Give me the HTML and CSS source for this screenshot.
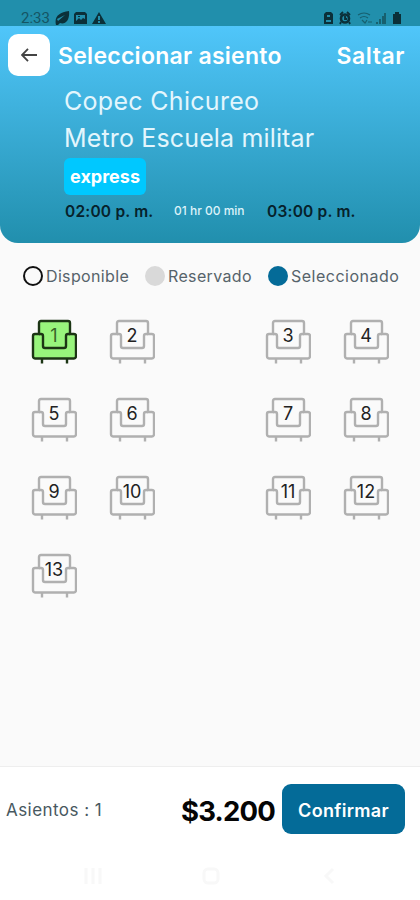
FILE: index.html
```html
<!DOCTYPE html>
<html lang="es">
<head>
    <meta charset="UTF-8">
    <meta name="viewport" content="width=device-width, initial-scale=1.0">
    <title>Seleccionar asiento</title>
    <link rel="stylesheet" href="styles.css">
</head>
<body>
    <div class="status-bar">
        <span class="clock">2:33</span>
        <svg class="status-left" width="52" height="14" viewBox="0 0 52 14" fill="#0b3039">
            <path d="M1 14C-1 6 4 1 14 0c1 8-3 14-9 12l-2 2zM3 10l7-6-8 4z" fill-rule="evenodd"/>
            <path d="M21 1h9l2 2v10H19V3zm0 3v6l3-3 2 2 2-2 2 1V4zm2 1h2v1h-2z" fill-rule="evenodd"/>
            <path d="M44 1l7 12H37zm-1 4v4h2V5zm0 5v2h2v-2z" fill-rule="evenodd"/>
        </svg>
        <svg class="status-right" width="78" height="14" viewBox="0 0 78 14" fill="#0b3039">
            <path d="M0 3l2-2h5l2 2v10H0zm3 1v2h3V4zM2 9v2h5V9z" fill-rule="evenodd"/>
            <circle cx="21" cy="7.500" r="4" fill="none" stroke="#0b3039" stroke-width="2.600"/>
            <path d="M16 4l3-3M23 1l3 3M21 5v3h2M17 11l-1 2M25 11l1 2" stroke="#0b3039" stroke-width="1.800"/>
            <path d="M34 4q6-4 12 0M36 7q4-3 8 0M38 9l3 3 2-3M44 11h4" fill="none" stroke="#17606f" stroke-width="1.200"/>
            <path d="M52 13v-2h2v2zm3 0V8h2v5zm3 0V5h2v8zm2 0V2h2v11z" fill="#17606f"/>
            <path d="M69 3h2V1h4v2h2v10h-8z"/>
        </svg>
    </div>

    <header class="header">
        <div class="title-row">
            <button class="back" aria-label="Volver">
                <svg width="16" height="14" viewBox="0 0 16 14" fill="none" stroke="#444" stroke-width="1.8">
                    <path d="M16 7H1M7 .8L1 7l6 6.2"/>
                </svg>
            </button>
            <h1 class="title">Seleccionar asiento</h1>
            <span class="skip">Saltar</span>
        </div>
        <div class="trip">
            <div class="stop from">Copec Chicureo</div>
            <div class="stop to">Metro Escuela militar</div>
            <span class="tag">express</span>
            <div class="times">
                <span class="time">02:00 p. m.</span>
                <span class="duration">01 hr 00 min</span>
                <span class="time">03:00 p. m.</span>
            </div>
        </div>
    </header>

    <div class="legend">
        <span class="legend-item available"><i class="dot"></i>Disponible</span>
        <span class="legend-item reserved"><i class="dot"></i>Reservado</span>
        <span class="legend-item chosen"><i class="dot"></i>Seleccionado</span>
    </div>

    <svg class="defs" width="0" height="0">
        <symbol id="seat" viewBox="0 0 46 46">
            <path class="legs" d="M11 39v5.500M36 39v5.500"/>
            <path class="shape" d="M8 15V4q0-2 2-2h27q2 0 2 2v11h4q2 0 2 2v20q0 2.500-2 2.500H4q-2 0-2-2.500V17q0-2 2-2z"/>
            <path class="line" d="M8 15h2q2 0 2 2v10q0 2 2 2h19q2 0 2-2V17q0-2 2-2h2"/>
        </symbol>
    </svg>

    <main class="seats" id="seats"></main>

    <footer class="footer">
        <div class="summary">
            <span class="count">Asientos : 1</span>
            <span class="price">$3.200</span>
            <button class="confirm">Confirmar</button>
        </div>
        <div class="nav">
            <svg width="18" height="18" viewBox="0 0 18 18"><path d="M2 1v16M9 1v16M16 1v16"/></svg>
            <svg width="18" height="18" viewBox="0 0 18 18"><rect x="2" y="2" width="14" height="14" rx="4"/></svg>
            <svg width="18" height="18" viewBox="0 0 18 18"><path d="M13 2L6 9l7 7"/></svg>
        </div>
    </footer>

    <script>
        const total = 13;
        const selected = [1];
        const seats = document.getElementById("seats");

        for (let n = 1; n <= total; n++) {
            const seat = document.createElement("div");
            // third column is the aisle
            seat.className = "seat" + (n % 4 === 3 ? " after-aisle" : "") + (selected.includes(n) ? " selected" : "");
            seat.innerHTML = `<svg width="46" height="46"><use href="#seat"/></svg><span class="number">${n}</span>`;
            seats.appendChild(seat);
        }
    </script>
</body>
</html>
```
FILE: styles.css
```css
* { box-sizing: border-box; }
body { margin: 0; height: 900px; display: flex; flex-direction: column; background: #fafafa; font-family: Inter, "Open Sans", sans-serif; white-space: nowrap; }
button { border: none; padding: 0; font-family: inherit; }
h1 { margin: 0; }

.status-bar { height: 26px; padding: 9px 18px 0 21px; display: flex; align-items: center; background: #218fac; }
.clock { width: 34px; font: 15px/16px Roboto, sans-serif; color: #155564; }
.status-right { margin-left: auto; }

.header { height: 217px; border-radius: 0 0 18px 18px; background: linear-gradient(#50c6fa, #218fad); color: #fff; }
.title-row { height: 58px; padding: 0 15px 0 8px; display: flex; align-items: center; }
.back { width: 42px; height: 42px; border-radius: 10px; background: #fff; display: flex; align-items: center; justify-content: center; }
.title { margin-left: 8px; padding-top: 2px; font-size: 23px; font-weight: 600; letter-spacing: 0.27px; }
.skip { margin-left: auto; padding-top: 2px; font-size: 23px; font-weight: 600; letter-spacing: 0.55px; }
.trip { padding-left: 64px; }
.stop { height: 37px; line-height: 34px; font-size: 25px; color: #e3f6fd; }
.from { letter-spacing: 0.3px; }
.to { letter-spacing: 0.15px; }
.tag { display: flex; align-items: center; justify-content: center; width: 82px; height: 37px; border-radius: 6px; background: #00c8ff; font-size: 18px; font-weight: 700; }
.times { display: flex; align-items: center; height: 33px; padding-left: 1px; }
.time { width: 109px; font-size: 15.5px; font-weight: 600; letter-spacing: 0.2px; color: #06222b; }
.duration { width: 93px; padding-bottom: 2px; font-size: 12px; font-weight: 500; color: #dcf2f9; }

.legend { display: flex; height: 66px; padding-left: 23px; align-items: center; font-size: 16px; letter-spacing: 0.35px; color: #56636a; }
.legend-item { display: flex; align-items: center; gap: 3px; }
.available { width: 122px; }
.reserved { width: 123px; }
.chosen { letter-spacing: 0.5px; }
.dot { width: 20px; height: 20px; border-radius: 50%; }
.available .dot { border: 2px solid #111; }
.reserved .dot { background: #d9d9d9; }
.chosen .dot { background: #046b98; }

.defs { position: absolute; }
.seats { flex: 1; display: grid; grid-template-columns: repeat(5, 78px); grid-auto-rows: 78px; padding: 10px 15px 0; align-content: start; }
.seat { display: grid; justify-items: center; align-items: start; fill: none; stroke: #b0b0b0; stroke-width: 2.4; color: #222; }
.seat > * { grid-area: 1 / 1; }
.after-aisle { grid-column: 4; }
.number { margin-top: 6px; font-size: 18px; line-height: 22px; }
.selected { stroke: #1c3514; }
.selected .number { color: #386528; }
.selected svg { fill: #98f57c; }
.line { fill: none; }

.footer { height: 134px; background: #fff; border-top: 1px solid #eee; }
.summary { height: 86px; padding: 0 15px 2px 6px; display: flex; align-items: center; }
.count { width: 175px; padding-top: 2px; font-size: 17px; letter-spacing: 0.45px; color: #48585f; }
.price { width: 101px; padding-top: 3px; font-size: 27.5px; font-weight: 700; letter-spacing: -0.8px; color: #050505; }
.confirm { width: 123px; height: 50px; padding-top: 3px; border-radius: 9px; background: #046b98; color: #fff; font-size: 18px; font-weight: 600; letter-spacing: 0.3px; }
.nav { display: flex; justify-content: space-between; padding: 14px 82px 0 84px; fill: none; stroke: #f8f8f8; stroke-width: 3; }
```
